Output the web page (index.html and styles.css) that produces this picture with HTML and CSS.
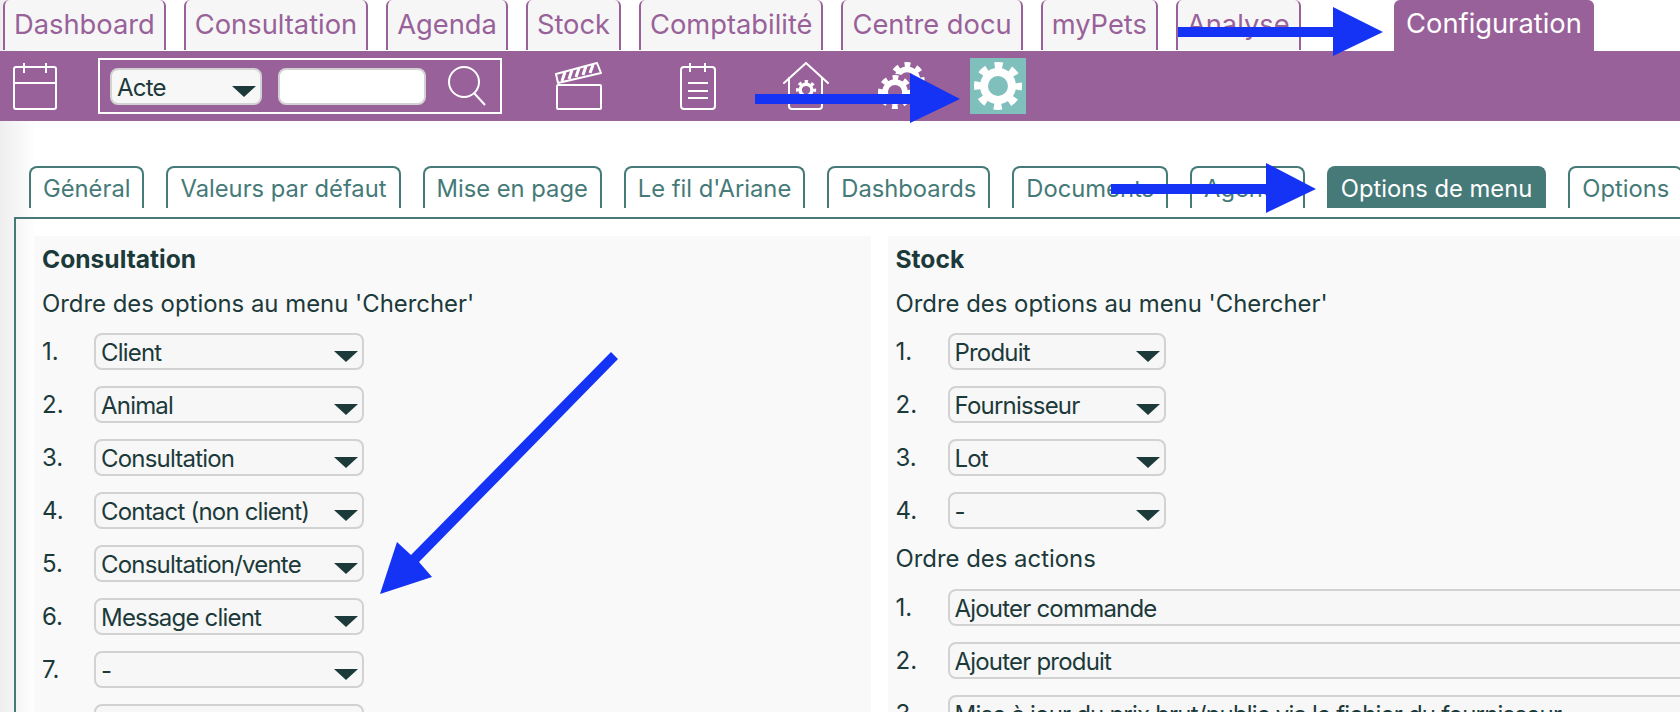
FILE: index.html
```html
<!DOCTYPE html>
<html lang="fr">
<head>
    <meta charset="UTF-8">
    <meta name="viewport" content="width=device-width, initial-scale=1.0">
    <title>Configuration - Options de menu</title>
    <link rel="stylesheet" href="styles.css">
</head>
<body>
    <svg class="defs" width="0" height="0">
        <defs>
            <g id="gear">
                <circle cx="24" cy="24" r="14" fill="none" stroke="currentColor" stroke-width="8"/>
                <circle cx="24" cy="24" r="20.5" fill="none" stroke="currentColor" stroke-width="7" stroke-dasharray="8 8.1" stroke-dashoffset="4"/>
            </g>
        </defs>
    </svg>

    <nav class="main-tabs">
        <a class="main-tab">Dashboard</a>
        <a class="main-tab">Consultation</a>
        <a class="main-tab">Agenda</a>
        <a class="main-tab">Stock</a>
        <a class="main-tab">Comptabilité</a>
        <a class="main-tab">Centre docu</a>
        <a class="main-tab">myPets</a>
        <a class="main-tab">Analyse</a>
        <a class="main-tab main-tab-active">Configuration</a>
    </nav>

    <div class="toolbar">
        <svg class="icon icon-calendar" width="44" height="48" viewBox="0 0 44 48" fill="none" stroke="#fff" stroke-width="2">
            <rect x="1" y="5" width="42" height="42" rx="2"/>
            <path d="M1 21H43M11 1V11M33 1V11"/>
        </svg>
        <div class="search-box">
            <div class="select select-search"><span>Acte</span></div>
            <div class="search-input"></div>
            <svg width="38" height="40" viewBox="0 0 38 40" fill="none" stroke="#fff" stroke-width="2">
                <circle cx="16" cy="16" r="15"/>
                <path d="M26 27L37 39"/>
            </svg>
        </div>
        <svg class="icon icon-clapper" width="48" height="48" viewBox="0 0 48 48" fill="none" stroke="#fff" stroke-width="2">
            <rect x="3" y="23" width="44" height="24" rx="1"/>
            <path d="M2 12L43 1L47 11L4 21Z" stroke-linejoin="round"/>
            <path d="M8 19L11 10M15 17L18 8M22 15L25 6M29 13L32 4M36 11L39 3" stroke-width="3"/>
        </svg>
        <svg class="icon icon-note" width="36" height="48" viewBox="0 0 36 48" fill="none" stroke="#fff" stroke-width="2">
            <rect x="1" y="5" width="34" height="42" rx="3"/>
            <path d="M10 1V10M25 1V10M8 21H28M8 29H28M8 36H28"/>
        </svg>
        <svg class="icon icon-house" width="46" height="48" viewBox="0 0 46 48" fill="none" stroke="#fff" stroke-width="2" color="#fff">
            <path d="M1 21L23 1L45 21M6 16V44Q6 47 9 47H36Q39 47 39 44V16" stroke-linecap="round"/>
            <use href="#gear" transform="translate(13 18) scale(0.42)"/>
        </svg>
        <svg class="icon icon-gears" width="48" height="48" viewBox="0 0 48 48" color="#fff">
            <use href="#gear" transform="translate(11.5 0) scale(0.73)"/>
            <circle cx="17" cy="30" r="18" fill="#996199"/>
            <use href="#gear" transform="translate(0 13) scale(0.71)"/>
        </svg>
        <div class="gear-active">
            <svg width="48" height="48" viewBox="0 0 48 48" color="#fff"><use href="#gear"/></svg>
        </div>
    </div>

    <nav class="sub-tabs">
        <a class="sub-tab">Général</a>
        <a class="sub-tab">Valeurs par défaut</a>
        <a class="sub-tab">Mise en page</a>
        <a class="sub-tab">Le fil d'Ariane</a>
        <a class="sub-tab">Dashboards</a>
        <a class="sub-tab">Documents</a>
        <a class="sub-tab">Agenda</a>
        <a class="sub-tab sub-tab-active">Options de menu</a>
        <a class="sub-tab">Options</a>
    </nav>

    <main class="panel">
        <section class="column">
            <h3>Consultation</h3>
            <p>Ordre des options au menu 'Chercher'</p>
            <div class="row"><span class="num">1.</span><div class="select"><span>Client</span></div></div>
            <div class="row"><span class="num">2.</span><div class="select"><span>Animal</span></div></div>
            <div class="row"><span class="num">3.</span><div class="select"><span>Consultation</span></div></div>
            <div class="row"><span class="num">4.</span><div class="select"><span>Contact (non client)</span></div></div>
            <div class="row"><span class="num">5.</span><div class="select"><span>Consultation/vente</span></div></div>
            <div class="row"><span class="num">6.</span><div class="select"><span>Message client</span></div></div>
            <div class="row"><span class="num">7.</span><div class="select"><span>-</span></div></div>
            <div class="row"><span class="num">8.</span><div class="select"><span>-</span></div></div>
        </section>
        <section class="column">
            <h3>Stock</h3>
            <p>Ordre des options au menu 'Chercher'</p>
            <div class="row"><span class="num">1.</span><div class="select select-small"><span>Produit</span></div></div>
            <div class="row"><span class="num">2.</span><div class="select select-small"><span>Fournisseur</span></div></div>
            <div class="row"><span class="num">3.</span><div class="select select-small"><span>Lot</span></div></div>
            <div class="row"><span class="num">4.</span><div class="select select-small"><span>-</span></div></div>
            <p class="actions-title">Ordre des actions</p>
            <div class="row"><span class="num">1.</span><div class="select select-wide"><span>Ajouter commande</span></div></div>
            <div class="row"><span class="num">2.</span><div class="select select-wide"><span>Ajouter produit</span></div></div>
            <div class="row"><span class="num">3.</span><div class="select select-wide"><span>Mise à jour du prix brut/public via le fichier du fournisseur</span></div></div>
        </section>
    </main>

    <!-- arrows drawn over the screenshot -->
    <svg class="arrows" width="1680" height="712" viewBox="0 0 1680 712" fill="#1433f5">
        <path d="M1178 27H1333V7L1383 32L1333 56V37H1178Z"/>
        <path d="M755 94H910V73L960 99L910 123V104H755Z"/>
        <path d="M1111 184H1266V163L1316 189L1266 213V194H1111Z"/>
        <path d="M611 352L618 359L419 562L432 577L380 594L397 542L411 555Z"/>
    </svg>
</body>
</html>
```

FILE: styles.css
```css
* {
    box-sizing: border-box;
}
html, body {
    margin: 0;
    height: 712px;
    overflow: hidden;
}
body {
    position: relative;
    font-family: Inter, "Noto Sans", sans-serif;
    color: #1c3a3a;
    background: linear-gradient(90deg, #eeeeee 0, #ffffff 36px);
}
.defs {
    position: absolute;
}

/* main tabs */
.main-tabs {
    display: flex;
    gap: 18px;
    height: 51px;
    padding-left: 3px;
}
.main-tab {
    height: 50px;
    padding: 0 9px;
    line-height: 50px;
    font-size: 27.3px;
    color: #996199;
    background-color: #f6f6f6;
    border: 2px solid #996199;
    border-top: 0;
    border-bottom: 0;
    border-radius: 6px 6px 0 0;
}
.main-tab-active {
    height: 51px;
    margin-left: 75px;
    padding: 0 10.5px;
    line-height: 48px;
    color: #fff;
    background-color: #996199;
}

/* toolbar */
.toolbar {
    display: flex;
    align-items: center;
    height: 70px;
    background-color: #996199;
}
.icon {
    flex: none;
}
.icon-calendar { margin-left: 13px; }
.icon-clapper { margin-left: 52px; }
.icon-note { margin-left: 78px; }
.icon-house { margin-left: 67px; }
.icon-gears { margin-left: 49px; }
.search-box {
    display: flex;
    align-items: center;
    width: 404px;
    height: 56px;
    margin-left: 41px;
    padding-left: 10px;
    border: 2px solid #fff;
}
.search-box svg {
    margin-left: 22px;
}
.search-input {
    width: 148px;
    height: 37px;
    margin-left: 16px;
    background-color: #fff;
    border: 2px solid #d2d2d2;
    border-radius: 8px;
}
.gear-active {
    display: flex;
    align-items: center;
    justify-content: center;
    width: 56px;
    height: 56px;
    margin-left: 44px;
    background-color: #7fbfbc;
}

/* sub tabs */
.sub-tabs {
    display: flex;
    gap: 22px;
    height: 42px;
    margin-top: 45px;
    padding-left: 29px;
    white-space: nowrap;
}
.sub-tab {
    flex: none;
    padding: 0 12px;
    line-height: 42px;
    font-size: 23.75px;
    color: #457a78;
    background-color: #fff;
    border: 2px solid #457a78;
    border-bottom: 0;
    border-radius: 8px 8px 0 0;
}
.sub-tab-active {
    color: #fff;
    background-color: #457a78;
}

/* panel with the two columns */
.panel {
    display: grid;
    grid-template-columns: 837px 900px;
    gap: 16.5px;
    width: 1800px;
    height: 600px;
    margin: 9px 0 0 14px;
    padding: 17px 0 0 18px;
    border: 2px solid #457a78;
    border-bottom: 0;
}
.column {
    padding: 8px 0 0 8px;
    background-color: #f9f9f9;
}
h3 {
    margin: 0;
    height: 30px;
    line-height: 30px;
    font-size: 24.6px;
    font-weight: 700;
}
.column p {
    margin: 15px 0 0;
    height: 30px;
    line-height: 30px;
    font-size: 23.9px;
}
.column p.actions-title {
    margin-top: 15px;
}
.row {
    display: flex;
    align-items: center;
    height: 37px;
    margin-top: 16px;
    font-size: 24px;
}
.column p + .row {
    margin-top: 14px;
}
.column .actions-title + .row {
    margin-top: 15px;
}
.num {
    flex: none;
    width: 52px;
}
.select {
    position: relative;
    flex: none;
    width: 270px;
    height: 37px;
    padding-left: 5px;
    line-height: 36px;
    font-size: 24px;
    letter-spacing: -0.8px;
    white-space: nowrap;
    background-color: #f7f7f7;
    border: 2px solid #d2d2d2;
    border-radius: 8px;
}
.select::after {
    content: "";
    position: absolute;
    top: 16px;
    right: 4px;
    border-left: 12px solid transparent;
    border-right: 12px solid transparent;
    border-top: 11px solid #1c3a3a;
}
.select-search {
    width: 152px;
}
.select-small {
    width: 218px;
}
.select-wide {
    width: 900px;
}

.arrows {
    position: absolute;
    top: 0;
    left: 0;
}
```
